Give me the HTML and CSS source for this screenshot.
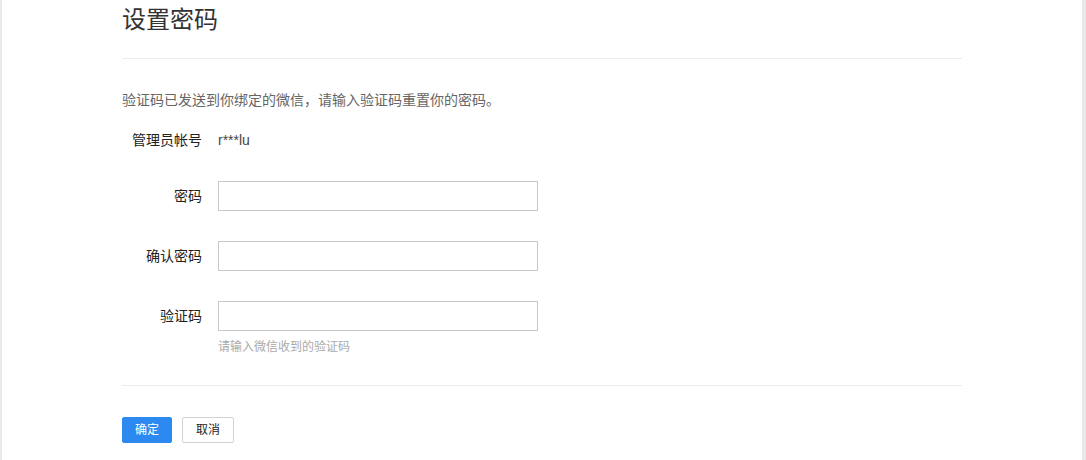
FILE: index.html
```html
<!DOCTYPE html>
<html lang="zh-CN">
<head>
<meta charset="utf-8">
<title>设置密码</title>
<link rel="stylesheet" href="styles.css">
</head>
<body>
<div class="page">
  <div class="content">
    <h1 class="title">设置密码</h1>
    <div class="divider"></div>
    <p class="desc">验证码已发送到你绑定的微信，请输入验证码重置你的密码。</p>
    <div class="form">
      <div class="row row-static">
        <span class="label">管理员帐号</span>
        <span class="value">r***lu</span>
      </div>
      <div class="row row-input">
        <span class="label">密码</span>
        <input class="input" type="password">
      </div>
      <div class="row row-input">
        <span class="label">确认密码</span>
        <input class="input" type="password">
      </div>
      <div class="row row-input">
        <span class="label">验证码</span>
        <input class="input" type="text">
      </div>
      <div class="hint">请输入微信收到的验证码</div>
    </div>
    <div class="divider divider-foot"></div>
    <div class="actions">
      <button class="btn btn-primary" type="button">确定</button>
      <button class="btn btn-default" type="button">取消</button>
    </div>
  </div>
</div>
</body>
</html>
```

FILE: styles.css
```css
html, body {
  margin: 0;
  padding: 0;
  height: 100%;
}
body {
  background: #e9e9e9;
  font-family: "Liberation Sans", "Noto Sans CJK SC", sans-serif;
  color: #333;
  overflow: hidden;
}
.page {
  margin: 0 4px 0 2px;
  background: #fff;
  height: 460px;
  padding-left: 120px;
  box-sizing: border-box;
}
.content {
  width: 840px;
}
.title {
  margin: 0;
  font-size: 24px;
  font-weight: normal;
  line-height: 40px;
  color: #333;
}
.divider {
  margin-top: 18px;
  height: 0;
  border-top: 1px solid #ececec;
}
.desc {
  margin: 31px 0 0;
  font-size: 14px;
  line-height: 20px;
  color: #666;
}
.form {
  margin-top: 20px;
}
.row {
  display: flex;
  align-items: center;
}
.row-static {
  height: 20px;
}
.row-input {
  height: 30px;
  margin-top: 30px;
}
.row-static + .row-input {
  margin-top: 31px;
}
.label {
  width: 80px;
  padding-right: 16px;
  text-align: right;
  font-size: 14px;
  line-height: 20px;
  color: #222;
  flex: none;
}
.value {
  font-size: 14px;
  line-height: 20px;
  color: #444;
}
.input {
  width: 320px;
  height: 30px;
  box-sizing: border-box;
  border: 1px solid #c8c8c8;
  border-radius: 0;
  padding: 0 8px;
  margin: 0;
  font-size: 14px;
  outline: none;
  background: #fff;
}
.hint {
  margin-top: 8px;
  padding-left: 96px;
  font-size: 12px;
  line-height: 16px;
  color: #aaa;
}
.divider-foot {
  margin-top: 30px;
}
.actions {
  margin-top: 31px;
  display: flex;
  gap: 10px;
}
.btn {
  height: 26px;
  margin: 0;
  padding: 0;
  font-family: "Liberation Sans", "Noto Sans CJK SC", sans-serif;
  font-size: 12px;
  line-height: 24px;
  border-radius: 2px;
  cursor: pointer;
  box-sizing: border-box;
}
.btn-primary {
  width: 50px;
  background: #2b89f0;
  border: 1px solid #2b89f0;
  color: #fff;
}
.btn-default {
  width: 52px;
  background: #fff;
  border: 1px solid #d2d2d2;
  color: #222;
}
```
